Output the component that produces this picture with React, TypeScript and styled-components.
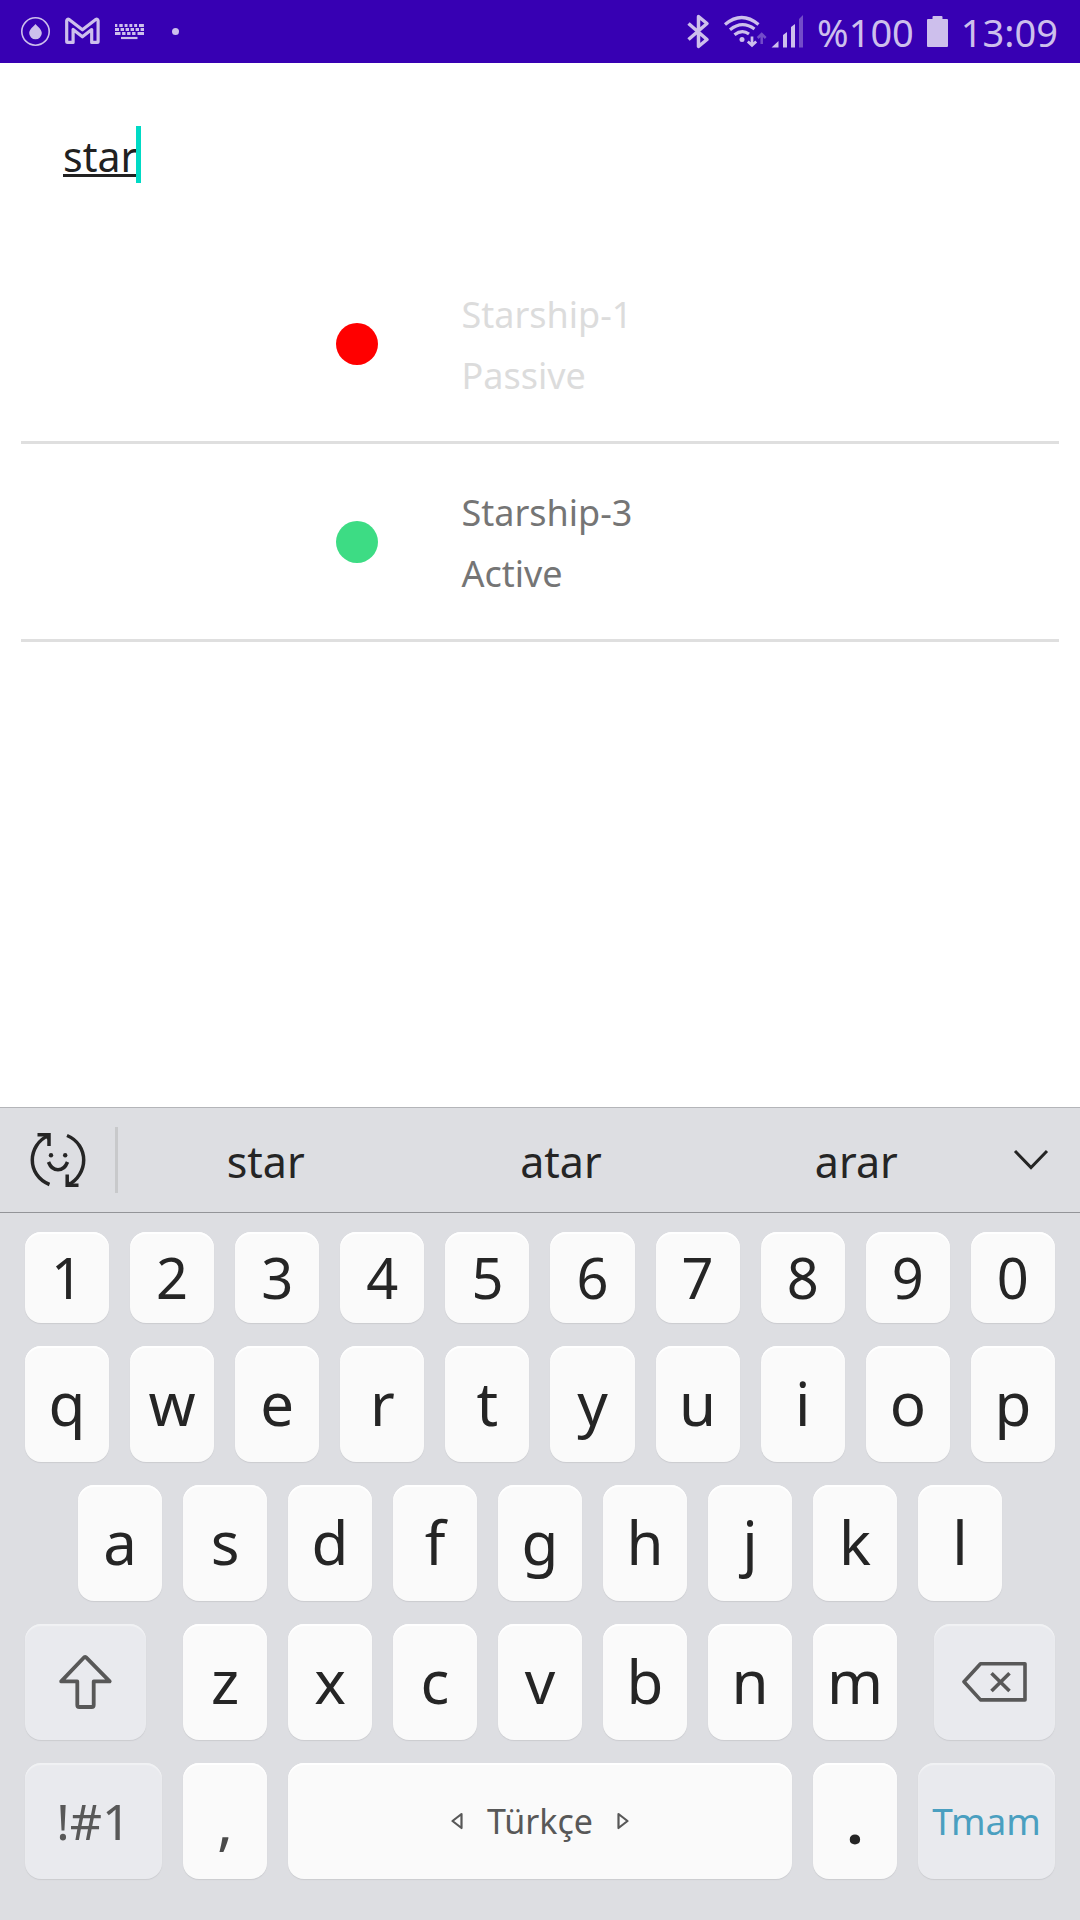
import React, { useState } from "react";
import styled, { createGlobalStyle } from "styled-components";

const GlobalStyle = createGlobalStyle`
  * { box-sizing: border-box; }
  body { margin: 0; background: #fff; }
  body, button, input { font-family: "Noto Sans", "Open Sans", sans-serif; }
  svg { display: block; flex: none; }
`;

const Screen = styled.div`
  min-height: 100vh;
  display: flex;
  flex-direction: column;
  background: #fff;
`;

const StatusBar = styled.header`
  display: flex;
  justify-content: space-between;
  height: 63px;
  padding: 0 22px 0 20px;
  background: #3700b3;
  color: #cdbfec;
`;

const StatusGroup = styled.div<{ $gap: number }>`
  display: flex;
  align-items: center;
  gap: ${(p) => p.$gap}px;
`;

const StatusText = styled.span`
  font-size: 38px;
  line-height: 60px;
`;

const MoreDot = styled.span`
  width: 7px;
  height: 7px;
  margin-left: 14px;
  border-radius: 50%;
  background: currentColor;
`;

const Content = styled.main`
  flex: 1;
  padding: 63px 21px 0;
`;

const SearchField = styled.label`
  display: flex;
  align-items: center;
  height: 57px;
  margin: 0 42px 63px;
`;

const SearchInput = styled.input`
  field-sizing: content;
  min-width: 1px;
  height: 57px;
  padding: 3px 0 0;
  border: 0;
  outline: 0;
  background: transparent;
  color: #212121;
  caret-color: transparent;
  font-size: 41px;
  line-height: 54px;
  text-decoration: underline;
  text-decoration-thickness: 3px;
  text-underline-offset: 2px;
  text-decoration-skip-ink: none;
`;

const Cursor = styled.span`
  width: 5px;
  height: 57px;
  margin-left: -1px;
  background: #00dac5;
`;

const ShipList = styled.ul`
  margin: 0;
  padding: 0;
  list-style: none;
`;

const ShipRow = styled.li`
  display: grid;
  grid-template-columns: 6fr 42px 13fr;
  align-items: center;
  height: 198px;
  border-bottom: 3px solid #dfdfdf;
`;

const StateDot = styled.span<{ $color: string }>`
  grid-column: 2;
  width: 42px;
  height: 42px;
  border-radius: 50%;
  background: ${(p) => p.$color};
`;

const ShipText = styled.div<{ $dim: boolean }>`
  padding: 2px 0 0 84px;
  color: ${(p) => (p.$dim ? "#dcdcdc" : "#757575")};
  font-size: 36px;
  line-height: 61px;
`;

const Keyboard = styled.section`
  border-top: 1px solid #b4b5b9;
  background: #dddee2;
`;

const Toolbar = styled.div`
  display: flex;
  align-items: center;
  height: 105px;
  border-bottom: 1px solid #939498;
`;

const PlainButton = styled.button`
  margin: 0;
  padding: 0;
  border: 0;
  background: none;
  color: #252525;
`;

const EmojiButton = styled(PlainButton)`
  display: flex;
  justify-content: center;
  width: 115px;
`;

const Divider = styled.span`
  width: 3px;
  height: 66px;
  background: #c8c9cb;
`;

const Suggestion = styled(PlainButton)`
  flex: 1;
  padding-top: 3px;
  font-size: 43px;
  line-height: 60px;
`;

const CollapseButton = styled(PlainButton)`
  display: flex;
  justify-content: center;
  width: 76px;
  padding-right: 22px;
`;

const Keys = styled.div`
  display: flex;
  flex-direction: column;
  gap: 23px;
  padding: 19px 25px 41px;
`;

const KeyRow = styled.div<{ $height: number; $inset?: number }>`
  display: flex;
  gap: 21px;
  height: ${(p) => p.$height}px;
  padding: 0 ${(p) => p.$inset ?? 0}px;
`;

const LetterGroup = styled.div`
  flex: 714 1 0;
  display: flex;
  gap: 21px;
  padding: 0 16px;
`;

const Key = styled.button<{ $grow?: number; $size?: number; $tone?: string }>`
  flex: ${(p) => p.$grow ?? 84} 1 0;
  min-width: 0;
  display: flex;
  align-items: center;
  justify-content: center;
  margin: 0;
  padding: 0 0 2px;
  border: 0;
  border-radius: 16px;
  background: #fafafa;
  box-shadow: 0 1px 1px #cbccd0, inset 0 2px 1px #fff;
  color: ${(p) => p.$tone ?? "#252525"};
  font-size: ${(p) => p.$size ?? 60}px;
  line-height: 72px;
`;

const FunctionKey = styled(Key)`
  padding: 0;
  background: #e9eaee;
  box-shadow: 0 1px 1px #cbccd0, inset 0 2px 1px #f1f2f4;
  color: ${(p) => p.$tone ?? "#585858"};
`;

const PunctuationKey = styled(Key)<{ $bold?: boolean }>`
  padding: 0;
  font-weight: ${(p) => (p.$bold ? 700 : 400)};
`;

const SpaceKey = styled(Key)`
  gap: 24px;
  padding: 0;
`;

const ships = [
  { name: "Starship-1", state: "Passive", color: "#ff0000" },
  { name: "Starship-3", state: "Active", color: "#3ddc84" },
];

const AppIcon = () => (
  <svg width="31" height="31" viewBox="20 16 31 31" fill="none">
    <circle cx="35.5" cy="31.5" r="13.7" stroke="currentColor" strokeWidth="1.6" />
    <path d="M35.5 24c2 2.600 6.300 5.400 6.300 9a6.300 6.300 0 0 1-12.600 0c0-3.600 4.300-6.400 6.300-9z" fill="currentColor" />
  </svg>
);

const MailIcon = () => (
  <svg width="37" height="31" viewBox="64 16 37 31" fill="none">
    <path
      d="M66.700 41.500V20.800q.4-2.200 2.400-1.400L82.400 29.800 95.700 19.400q2-.8 2.400 1.400V41.500q0 .9-.9.900H91.700V29.500L82.400 36.800 73.100 29.500V42.400H67.600q-.9 0-.9-.9z"
      stroke="currentColor"
      strokeWidth="3.200"
      strokeLinejoin="round"
    />
  </svg>
);

const KeyboardIcon = () => (
  <svg width="31" height="31" viewBox="114 16 31 31" stroke="currentColor" strokeWidth="2.800">
    <path d="M115 25.500h2.300m2 0h3.400m1.900 0h2.900m1.900 0h2.900m1.900 0h2.900m1.900 0h4.900M115 29.500h4m1.600 0h3.400m1.600 0h3.400m1.600 0h3.400m1.600 0h3.400m1.600 0h3.400M115 33.500h5.500m1.600 0h3.400m1.600 0h3.400m1.600 0h3.400m2 0h6.500" />
    <path d="M121 38h16.500" strokeWidth="2.200" />
  </svg>
);

const BluetoothIcon = () => (
  <svg width="23" height="35" viewBox="687 14 23 35" fill="none" stroke="currentColor" strokeWidth="3.500" strokeLinejoin="round">
    <path d="M688.500 23.500 707 39.500 698.500 46.500V16.500L707 23.500 688.500 39.500" />
  </svg>
);

const WifiIcon = () => (
  <svg width="44" height="35" viewBox="724 14 44 35" fill="none" stroke="currentColor" strokeWidth="3.200">
    <path d="M726 24.500Q742.700 10.500 759.500 24.500M731 29.800Q743 20 755.500 29M735.500 34.800Q743 29 750 34" />
    <circle cx="743" cy="39.500" r="2.500" fill="currentColor" stroke="none" />
    <path d="M753 36.500V45M748.800 41.500 753 45.500 757.200 41.500" strokeWidth="2.700" />
    <path d="M762.700 44V34.500M758.700 38 762.700 34 766.700 38" strokeWidth="2.500" opacity=".4" />
  </svg>
);

const SignalIcon = () => (
  <svg width="33" height="35" viewBox="772 14 33 35" fill="currentColor">
    <path d="M772.500 47.500 779.500 41v6.500zM784 47.500V35l4-3v15.500zM792 47.500V27l4-3v23.500z" />
    <path d="M800 47.500V19l4-4v32.500z" opacity=".4" />
  </svg>
);

const BatteryIcon = () => (
  <svg width="21" height="35" viewBox="928 14 21 35" fill="currentColor">
    <path d="M933.500 19v-2q0-1 1-1h8q1 0 1 1v2h4.500q1 0 1 1v26q0 1-1 1h-19q-1 0-1-1V20q0-1 1-1z" />
  </svg>
);

const EmojiIcon = () => (
  <svg width="58" height="58" viewBox="29 41 58 58" fill="none" stroke="currentColor" strokeWidth="3.500">
    <path d="M49.500 94.500C38 90 32.300 80 32.300 70 32.300 60 38 50 48.500 45.500" />
    <path d="M67 45.500C78 50 83.700 60 83.700 70 83.700 80 78 90 68 95" />
    <path d="M37.500 44.800H49V56" />
    <path d="M78.500 95.200H67.200V84.500" />
    <path d="M42 44h8v8zM74 96.500h-8v-8z" fill="currentColor" stroke="none" />
    <path d="M48.500 72Q51.500 79.800 58 79.800T67.500 72" />
    <circle cx="51" cy="65.300" r="2.200" fill="currentColor" stroke="none" />
    <circle cx="65.200" cy="65.300" r="2.200" fill="currentColor" stroke="none" />
  </svg>
);

const ChevronIcon = () => (
  <svg width="36" height="22" viewBox="0 0 36 22" fill="none" stroke="currentColor" strokeWidth="3">
    <path d="M2 2 18 18.500 34 2" />
  </svg>
);

const ShiftIcon = () => (
  <svg width="54" height="56" viewBox="59 54 54 56" fill="none" stroke="currentColor" strokeWidth="3.800" strokeLinejoin="round">
    <path d="M84.200 57.200q1.400-.6 2.400.6L109.700 81.400H93.700V105q0 2-2 2H79.300q-2 0-2-2V81.400H61.200z" />
  </svg>
);

const BackspaceIcon = () => (
  <svg width="66" height="42" viewBox="962 61 66 42" fill="none" stroke="currentColor" strokeWidth="3.600" strokeLinejoin="round">
    <path d="M980.500 63.700H1025V99.900H980.500L964 81.800z" />
    <path d="M991.500 73.200 1009.500 91M1009.500 73.200 991.500 91" />
  </svg>
);

const LanguageArrow = ({ next = false }: { next?: boolean }) => (
  <svg width="12" height="18" viewBox="0 0 12 18" fill="none" stroke="currentColor" strokeWidth="2.200" strokeLinejoin="round">
    <path d={next ? "M1.500 2 10.500 9 1.500 16z" : "M10.500 2 1.500 9 10.500 16z"} />
  </svg>
);

export default function App() {
  const [query, setQuery] = useState("star");
  const visible = ships.filter((s) => s.name.toLowerCase().includes(query.toLowerCase()));
  const type = (letter: string) => setQuery((q) => q + letter);
  const letters = (chars: string, size?: number) =>
    chars.split("").map((c) => (
      <Key key={c} type="button" $size={size} onClick={() => type(c)}>
        {c}
      </Key>
    ));

  return (
    <Screen>
      <GlobalStyle />
      <StatusBar>
        <StatusGroup $gap={13}>
          <AppIcon />
          <MailIcon />
          <KeyboardIcon />
          <MoreDot />
        </StatusGroup>
        <StatusGroup $gap={13}>
          <BluetoothIcon />
          <StatusGroup $gap={4}>
            <WifiIcon />
            <SignalIcon />
          </StatusGroup>
          <StatusText>%100</StatusText>
          <BatteryIcon />
          <StatusText>13:09</StatusText>
        </StatusGroup>
      </StatusBar>

      <Content>
        <SearchField>
          <SearchInput
            type="text"
            aria-label="Search"
            spellCheck={false}
            value={query}
            onChange={(e) => setQuery(e.target.value)}
          />
          <Cursor />
        </SearchField>
        <ShipList>
          {visible.map((s) => (
            <ShipRow key={s.name}>
              <StateDot $color={s.color} />
              <ShipText $dim={s.state === "Passive"}>
                <div>{s.name}</div>
                <div>{s.state}</div>
              </ShipText>
            </ShipRow>
          ))}
        </ShipList>
      </Content>

      <Keyboard>
        <Toolbar>
          <EmojiButton type="button" aria-label="Emoji">
            <EmojiIcon />
          </EmojiButton>
          <Divider />
          {["star", "atar", "arar"].map((w) => (
            <Suggestion key={w} type="button" onClick={() => setQuery(w)}>
              {w}
            </Suggestion>
          ))}
          <CollapseButton type="button" aria-label="Collapse">
            <ChevronIcon />
          </CollapseButton>
        </Toolbar>
        <Keys>
          <KeyRow $height={91}>{letters("1234567890", 56)}</KeyRow>
          <KeyRow $height={116}>{letters("qwertyuiop")}</KeyRow>
          <KeyRow $height={116} $inset={53}>
            {letters("asdfghjkl")}
          </KeyRow>
          <KeyRow $height={116}>
            <FunctionKey type="button" $grow={121} aria-label="Shift">
              <ShiftIcon />
            </FunctionKey>
            <LetterGroup>{letters("zxcvbnm")}</LetterGroup>
            <FunctionKey
              type="button"
              $grow={121}
              aria-label="Backspace"
              onClick={() => setQuery((q) => q.slice(0, -1))}
            >
              <BackspaceIcon />
            </FunctionKey>
          </KeyRow>
          <KeyRow $height={116}>
            <FunctionKey type="button" $grow={137} $size={50}>
              !#1
            </FunctionKey>
            <PunctuationKey type="button" $tone="#4a4a4a" onClick={() => type(",")}>
              ,
            </PunctuationKey>
            <SpaceKey type="button" $grow={504} $size={34} $tone="#585858" onClick={() => type(" ")}>
              <LanguageArrow />
              Türkçe
              <LanguageArrow next />
            </SpaceKey>
            <PunctuationKey type="button" $bold onClick={() => type(".")}>
              .
            </PunctuationKey>
            <FunctionKey type="button" $grow={137} $size={37} $tone="#4a9fc0">
              Tmam
            </FunctionKey>
          </KeyRow>
        </Keys>
      </Keyboard>
    </Screen>
  );
}
